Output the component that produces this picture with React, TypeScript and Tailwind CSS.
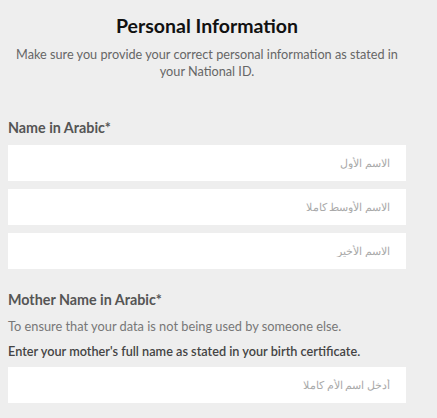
import React from "react";

const nameFields = ["الاسم الأول", "الاسم الأوسط كاملا", "الاسم الأخير"];

function ArabicInput({ placeholder }: { placeholder: string }) {
  return (
    <input
      dir="rtl"
      type="text"
      placeholder={placeholder}
      className="block h-[36px] w-full bg-white px-[16px] text-[10.5px] text-[#333] outline-none placeholder:text-[#aaa]"
    />
  );
}

export default function App() {
  return (
    <div className="min-h-screen w-full bg-[#eeeeee] font-['Lato',sans-serif]">
      <div className="w-[414px] px-[8px] pt-[14px]">
        <h1 className="text-center text-[19.5px] font-bold leading-[24px] text-[#111]">Personal Information</h1>
        <p className="mt-[8px] text-center text-[12.7px] leading-[17px] text-[#666]">
          Make sure you provide your correct personal information as stated in your National ID.
        </p>

        <h2 className="mt-[39px] text-[14.3px] font-bold leading-[18px] text-[#555]">Name in Arabic*</h2>
        <div className="mt-[8px] flex flex-col gap-[8px]">
          {nameFields.map((field) => (
            <ArabicInput key={field} placeholder={field} />
          ))}
        </div>

        <h2 className="mt-[22px] text-[14.3px] font-bold leading-[18px] text-[#555]">Mother Name in Arabic*</h2>
        <p className="mt-[8px] text-[12.8px] leading-[18px] text-[#777]">
          To ensure that your data is not being used by someone else.
        </p>
        <p className="mt-[7px] text-[12.7px] font-semibold leading-[18px] text-[#444]">
          Enter your mother's full name as stated in your birth certificate.
        </p>
        <div className="mt-[7px]">
          <ArabicInput placeholder="أدخل اسم الأم كاملا" />
        </div>
      </div>
    </div>
  );
}
